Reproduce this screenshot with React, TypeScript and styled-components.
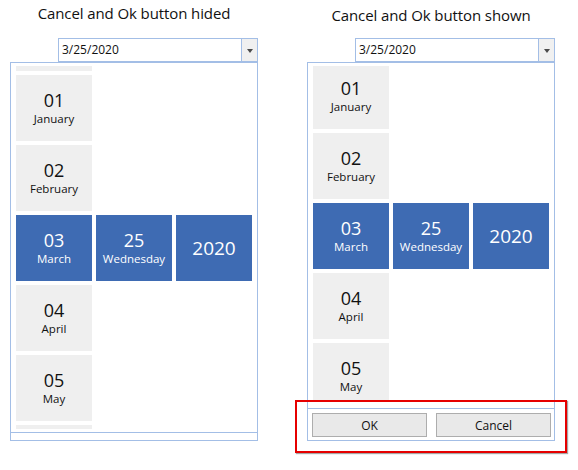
import React from "react";
import styled, { createGlobalStyle } from "styled-components";

const BORDER = "#a3bee6";
const TILE = "#efefef";
const BLUE = "#3e6bb3";

const GlobalStyle = createGlobalStyle`
  html, body { margin: 0; padding: 0; background: #ffffff; }
  body { font-family: "Open Sans", "Noto Sans", sans-serif; color: #111; }
  * { box-sizing: border-box; }
`;

const Page = styled.div`
  display: flex;
  gap: 49px;
  padding-left: 10px;
  width: 578px;
  height: 470px;
`;

const Column = styled.div`
  width: 248px;
  display: flex;
  flex-direction: column;
  position: relative;
`;

const Title = styled.div<{ $top: number }>`
  height: 38px;
  padding-top: ${(p) => p.$top}px;
  font-size: 15px;
  line-height: 20px;
  text-align: center;
  color: #111;
  letter-spacing: -0.1px;
`;

const Combo = styled.div`
  align-self: flex-end;
  width: 200px;
  height: 24px;
  border: 1px solid ${BORDER};
  display: flex;
  background: #fff;
`;

const ComboText = styled.div`
  flex: 1;
  font-size: 12px;
  line-height: 22px;
  padding-left: 3px;
  color: #111;
`;

const ComboButton = styled.div`
  width: 16px;
  border-left: 1px solid ${BORDER};
  background: #f0f0f0;
  display: flex;
  align-items: center;
  justify-content: center;
`;

const Arrow = styled.span`
  width: 0;
  height: 0;
  border-left: 3.5px solid transparent;
  border-right: 3.5px solid transparent;
  border-top: 4px solid #4a4a4a;
  margin-top: 1px;
`;

const Popup = styled.div`
  height: 379px;
  border: 1px solid ${BORDER};
  display: flex;
  flex-direction: column;
  position: relative;
  background: #fff;
`;

const Viewport = styled.div<{ $height: number }>`
  margin: 3px 5px 0 5px;
  height: ${(p) => p.$height}px;
  overflow: hidden;
`;

const List = styled.div<{ $offset: number }>`
  display: flex;
  flex-direction: column;
  gap: 4px;
  margin-top: ${(p) => p.$offset}px;
`;

const Row = styled.div`
  display: flex;
  gap: 4px;
`;

const Tile = styled.div<{ $selected?: boolean }>`
  width: 76px;
  height: 66px;
  flex: none;
  background: ${(p) => (p.$selected ? BLUE : TILE)};
  color: ${(p) => (p.$selected ? "#ffffff" : "#111111")};
  display: flex;
  flex-direction: column;
  align-items: center;
  justify-content: center;
`;

const Num = styled.div<{ $big?: boolean }>`
  font-size: ${(p) => (p.$big ? 19 : 18)}px;
  line-height: 20px;
`;

const Label = styled.div`
  font-size: 11.5px;
  line-height: 16px;
  margin-top: 1px;
`;

const Footer = styled.div<{ $gap: number; $height: number }>`
  margin-top: ${(p) => p.$gap}px;
  height: ${(p) => p.$height}px;
  border-top: 1px solid ${BORDER};
  display: grid;
  grid-template-columns: 1fr 1fr;
  gap: 9px;
  padding: 4px 3px 3px 4px;
`;

const Button = styled.button`
  height: 24px;
  border: 1px solid #adadad;
  background: #e9e9e9;
  font-family: "Open Sans", "Noto Sans", sans-serif;
  font-size: 12px;
  color: #111;
  padding: 0;
  margin: 0;
`;

const Highlight = styled.div`
  position: absolute;
  left: -13px;
  top: 337px;
  width: 272px;
  height: 53px;
  border: 2px solid #e60000;
  box-shadow: 1px 1px 1px rgba(0, 0, 0, 0.35);
  pointer-events: none;
`;

type Item = { n: string; m: string; partial?: boolean };

const months: Item[] = [
  { n: "12", m: "December", partial: true },
  { n: "01", m: "January" },
  { n: "02", m: "February" },
  { n: "03", m: "March" },
  { n: "04", m: "April" },
  { n: "05", m: "May" },
  { n: "06", m: "June", partial: true },
];

function Picker({ offset, items }: { offset: number; items: Item[] }) {
  return (
    <List $offset={offset}>
      {items.map((it) =>
        it.n === "03" ? (
          <Row key={it.n}>
            <Tile $selected>
              <Num>{it.n}</Num>
              <Label>{it.m}</Label>
            </Tile>
            <Tile $selected>
              <Num>25</Num>
              <Label>Wednesday</Label>
            </Tile>
            <Tile $selected>
              <Num $big>2020</Num>
            </Tile>
          </Row>
        ) : (
          <Row key={it.n}>
            <Tile aria-label={it.partial ? `${it.n} ${it.m}` : undefined}>
              {!it.partial && (
                <>
                  <Num>{it.n}</Num>
                  <Label>{it.m}</Label>
                </>
              )}
            </Tile>
          </Row>
        )
      )}
    </List>
  );
}

function ComboBox() {
  return (
    <Combo>
      <ComboText>3/25/2020</ComboText>
      <ComboButton>
        <Arrow />
      </ComboButton>
    </Combo>
  );
}

export default function App() {
  return (
    <>
      <GlobalStyle />
      <Page>
        <Column>
          <Title $top={3}>Cancel and Ok button hided</Title>
          <ComboBox />
          <Popup>
            <Viewport $height={363}>
              <Picker offset={-61} items={months} />
            </Viewport>
            <Footer $gap={3} $height={8} />
          </Popup>
        </Column>
        <Column>
          <Title $top={5}>Cancel and Ok button shown</Title>
          <ComboBox />
          <Popup>
            <Viewport $height={336}>
              <Picker offset={-3} items={months.slice(1, 6)} />
            </Viewport>
            <Footer $gap={6} $height={32}>
              <Button>OK</Button>
              <Button>Cancel</Button>
            </Footer>
            <Highlight />
          </Popup>
        </Column>
      </Page>
    </>
  );
}
